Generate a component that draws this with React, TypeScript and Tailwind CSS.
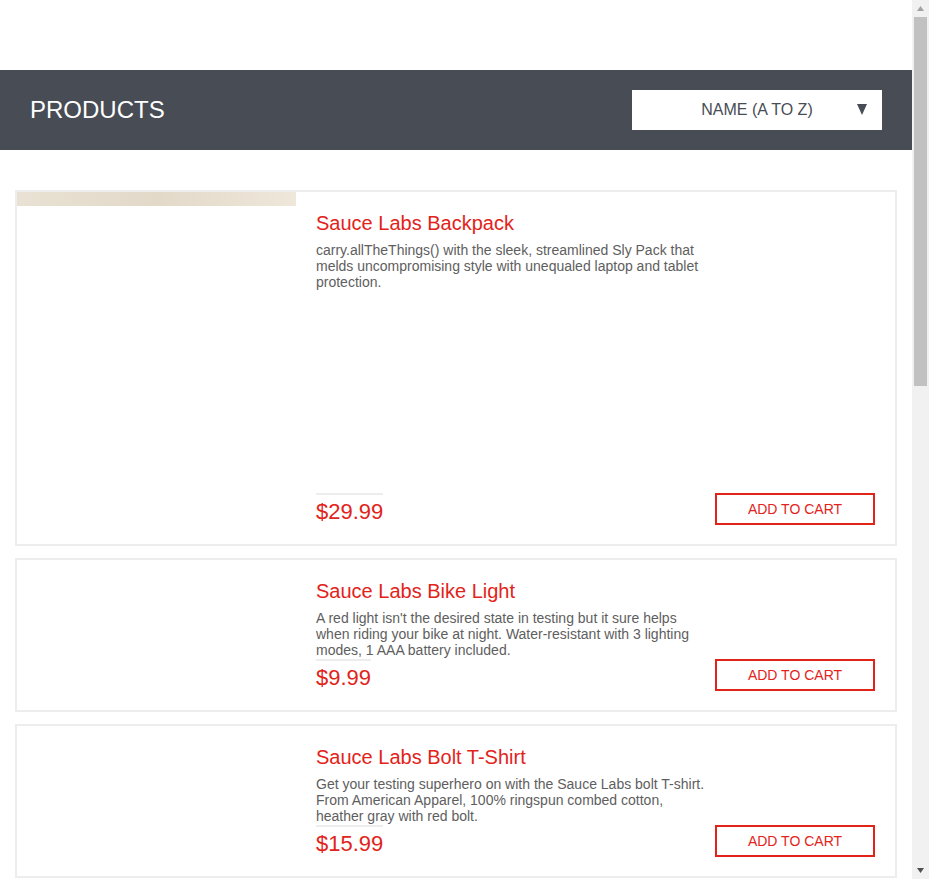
import React from "react";

type Item = { name: string; desc: string; price: string; image?: boolean };

const items: Item[] = [
  {
    name: "Sauce Labs Backpack",
    desc: "carry.allTheThings() with the sleek, streamlined Sly Pack that melds uncompromising style with unequaled laptop and tablet protection.",
    price: "$29.99",
    image: true,
  },
  {
    name: "Sauce Labs Bike Light",
    desc: "A red light isn't the desired state in testing but it sure helps when riding your bike at night. Water-resistant with 3 lighting modes, 1 AAA battery included.",
    price: "$9.99",
  },
  {
    name: "Sauce Labs Bolt T-Shirt",
    desc: "Get your testing superhero on with the Sauce Labs bolt T-shirt. From American Apparel, 100% ringspun combed cotton, heather gray with red bolt.",
    price: "$15.99",
  },
  {
    name: "Sauce Labs Fleece Jacket",
    desc: "It's not every day that you come across a midweight quarter-zip fleece jacket capable of handling everything from a relaxing day outdoors to a busy day at the office.",
    price: "$49.99",
  },
  {
    name: "Sauce Labs Onesie",
    desc: "Rib snap infant onesie for the junior automation engineer in development. Reinforced 3-snap bottom closure, two-needle hemmed sleeved and bottom won't unravel.",
    price: "$7.99",
  },
  {
    name: "Test.allTheThings() T-Shirt (Red)",
    desc: "This classic Sauce Labs t-shirt is perfect to wear when cozying up to your keyboard to automate a few tests. Super-soft and comfy ringspun combed cotton.",
    price: "$15.99",
  },
];

function Card({ item }: { item: Item }) {
  return (
    <div className="flex border-2 border-[#ededed] bg-white mb-[12px]">
      <div className={`w-[279px] shrink-0 ${item.image ? "h-[352px]" : ""}`}>
        {item.image && (
          <div className="h-[14px] w-full bg-gradient-to-r from-[#e9e1d3] via-[#e2d9c9] to-[#efe7da]" />
        )}
      </div>
      <div className="flex flex-1 flex-col pl-5 pr-5 pt-5 pb-[18px]">
        <div className="text-[20px] leading-[22px] text-[#e2231a]">{item.name}</div>
        <div className="mt-2 max-w-[395px] text-[14px] leading-[16px] text-[#5e5e5e]">
          {item.desc}
        </div>
        <div className="mt-auto flex items-start justify-between pt-px">
          <div className="border-t-2 border-[#ededed] pt-[3px] text-[22px] leading-[28px] text-[#e2231a]">
            {item.price}
          </div>
          <button className="h-[32px] w-[160px] border-2 border-[#e2231a] bg-white text-[14px] leading-none text-[#e2231a] cursor-pointer">
            ADD TO CART
          </button>
        </div>
      </div>
    </div>
  );
}

function Scrollbar() {
  return (
    <div className="flex h-full w-[17px] shrink-0 flex-col items-center bg-[#f1f1f1]">
      <svg width="17" height="17" viewBox="0 0 17 17" className="shrink-0">
        <polygon points="5,11 12,11 8.5,6" fill="#a3a3a3" />
      </svg>
      <div className="h-[369px] w-[13px] shrink-0 bg-[#c1c1c1]" />
      <div className="flex-1" />
      <svg width="17" height="17" viewBox="0 0 17 17" className="shrink-0">
        <polygon points="5,6 12,6 8.5,11" fill="#505050" />
      </svg>
    </div>
  );
}

export default function App() {
  return (
    <div
      className="flex h-screen w-full overflow-hidden bg-white"
      style={{ fontFamily: '"Liberation Sans", Arial, Helvetica, sans-serif' }}
    >
      <div className="h-full w-[912px] shrink-0 overflow-hidden">
        <div className="h-[70px]" />
        <div className="flex h-[80px] items-center justify-between bg-[#474c55] px-[30px]">
          <div className="text-[24px] leading-none text-white">PRODUCTS</div>
          <div className="relative flex h-10 w-[250px] items-center justify-center bg-white text-[16px] text-[#474c55]">
            <span>NAME (A TO Z)</span>
            <svg
              width="10"
              height="11"
              viewBox="0 0 10 11"
              className="absolute right-[15px] top-[14px]"
            >
              <polygon points="0,0 10,0 5,11" fill="#474c55" />
            </svg>
          </div>
        </div>
        <div className="px-[15px] pt-10 pb-10">
          {items.map((it) => (
            <Card key={it.name} item={it} />
          ))}
        </div>
      </div>
      <Scrollbar />
    </div>
  );
}
